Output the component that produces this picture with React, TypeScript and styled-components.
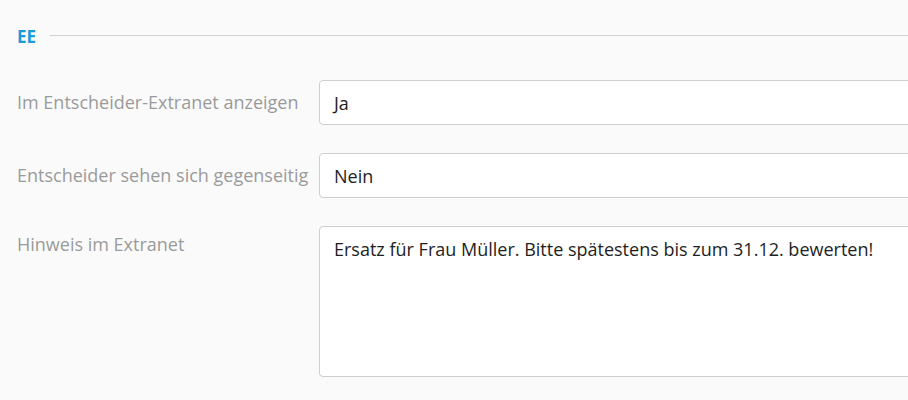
import styled, { createGlobalStyle } from "styled-components";

const GlobalStyle = createGlobalStyle`
  html, body {
    margin: 0;
    padding: 0;
    background: #fafafa;
    overflow: hidden;
  }
  body {
    font-family: "Open Sans", "Noto Sans", sans-serif;
  }
`;

const Page = styled.div`
  width: 908px;
  height: 400px;
  overflow: hidden;
  background: #fafafa;
  padding: 26px 0 0 17px;
  box-sizing: border-box;
`;

const SectionHeader = styled.div`
  display: flex;
  align-items: center;
  gap: 14px;
  margin-right: -20px;
`;

const SectionTitle = styled.span`
  color: #1b9bd8;
  font-weight: 700;
  font-size: 17px;
  line-height: 22px;
`;

const Rule = styled.div`
  flex: 1;
  height: 1px;
  background: #d2d2d2;
  margin-top: -3px;
`;

const Form = styled.div`
  display: flex;
  flex-direction: column;
  gap: 28px;
  margin-top: 32px;
  margin-right: -30px;
`;

const Row = styled.div<{ $top?: boolean }>`
  display: grid;
  grid-template-columns: 302px 1fr;
  align-items: ${(p) => (p.$top ? "start" : "center")};
`;

const Label = styled.div<{ $top?: boolean }>`
  color: #9a9a9a;
  font-size: 18px;
  line-height: 24px;
  white-space: nowrap;
  padding-top: ${(p) => (p.$top ? "8px" : "0")};
  margin-top: -2px;
`;

const Field = styled.div<{ $height: number }>`
  height: ${(p) => p.$height}px;
  box-sizing: border-box;
  background: #fff;
  border: 1px solid #cfcfcf;
  border-radius: 4px;
  padding: 0 14px;
  color: #1e1e1e;
  font-size: 18px;
  line-height: 24px;
  display: flex;
  align-items: ${(p) => (p.$height > 60 ? "flex-start" : "center")};
  padding-top: ${(p) => (p.$height > 60 ? "10px" : "0")};
`;

export default function App() {
  return (
    <>
      <GlobalStyle />
      <Page>
        <SectionHeader>
          <SectionTitle>EE</SectionTitle>
          <Rule />
        </SectionHeader>
        <Form>
          <Row>
            <Label>Im Entscheider-Extranet anzeigen</Label>
            <Field $height={45}>Ja</Field>
          </Row>
          <Row>
            <Label>Entscheider sehen sich gegenseitig</Label>
            <Field $height={45}>Nein</Field>
          </Row>
          <Row $top>
            <Label $top>Hinweis im Extranet</Label>
            <Field $height={151}>
              Ersatz für Frau Müller. Bitte spätestens bis zum 31.12. bewerten!
            </Field>
          </Row>
        </Form>
      </Page>
    </>
  );
}
